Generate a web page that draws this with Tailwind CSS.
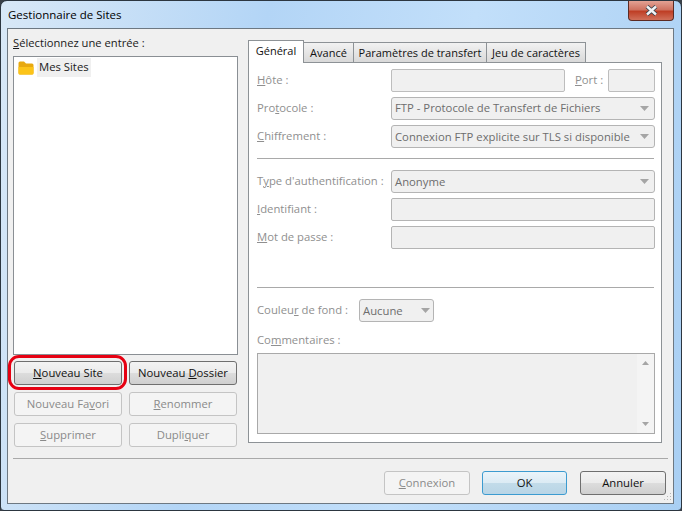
<!DOCTYPE html>
<html lang="fr">
<head>
  <meta charset="UTF-8" />
  <title>Gestionnaire de Sites</title>
  <script src="https://cdn.jsdelivr.net/npm/@tailwindcss/browser@4"></script>
</head>
<body class="bg-[#3a4048] overflow-hidden font-['Open_Sans',sans-serif] text-[11.3px] text-[#1a1a1a]">

<!-- Window frame -->
<div class="relative w-[682px] h-[511px] rounded-t-[7px] rounded-b-[4px] border border-[#2c3640] bg-[linear-gradient(100deg,#d8e8f7_0%,#b3d5f6_35%,#c2dffa_62%,#a9cff3_100%)] overflow-hidden">

  <!-- Title bar -->
  <div class="h-[27px] flex items-start justify-between pl-[7px] pr-[7px]">
    <span class="text-[11.5px] leading-[28px] text-black">Gestionnaire de Sites</span>
    <div class="w-[46px] h-[20px] rounded-b-[4px] border border-t-0 border-[#5c2a22] bg-[linear-gradient(180deg,#e3a294_0%,#cf7361_45%,#bf3f26_55%,#d0705a_100%)] flex items-center justify-center">
      <svg width="13" height="11" viewBox="0 0 13 11">
        <path d="M2 1.5 L11 9.5 M11 1.5 L2 9.5" stroke="#39424c" stroke-width="4.2" />
        <path d="M2 1.5 L11 9.5 M11 1.5 L2 9.5" stroke="#f2f4f6" stroke-width="2.4" />
      </svg>
    </div>
  </div>

  <!-- Client area -->
  <div class="relative mx-[6px] w-[667px] h-[476px] border border-[#6d7882] bg-[#f0f0f0]">
    <div class="flex h-[429px]">

      <!-- Left column -->
      <div class="w-[233px] pl-[5px] shrink-0">
        <div class="h-[27px] leading-[27px] text-[11.2px] text-[#1a1a1a]"><u>S</u>électionnez une entrée :</div>
        <div class="w-[225px] h-[299px] border border-[#8a8f94] bg-white pt-[1px] pl-[4px]">
          <div class="flex items-center h-[19px]">
            <svg width="16" height="14" viewBox="0 0 16 14">
              <path d="M0.5 2 Q0.5 0.5 2 0.5 H6 L8 2.5 H14 Q15.5 2.5 15.5 4 V12 Q15.5 13.5 14 13.5 H2 Q0.5 13.5 0.5 12 Z" fill="#e8a90f" />
              <path d="M0.5 6 H15.5 V12 Q15.5 13.5 14 13.5 H2 Q0.5 13.5 0.5 12 Z" fill="#fcc419" />
            </svg>
            <span class="ml-[3px] px-[2px] h-[19px] bg-[#f0f0f0] leading-[17px] text-[#1a1a1a]">Mes Sites</span>
          </div>
        </div>
        <div class="grid grid-cols-[108px_108px] gap-x-[7px] gap-y-[7px] mt-[6px] ml-[1px]">
          <div class="relative">
            <button class="w-full h-[24px] rounded-[3px] border border-[#6f6f6f] bg-[linear-gradient(180deg,#f3f3f3_0%,#ebebeb_48%,#dcdcdc_52%,#cfcfcf_100%)] text-[#111]"><u>N</u>ouveau Site</button>
            <div class="absolute left-[-6px] top-[-6px] w-[119px] h-[35px] rounded-[11px] border-[3px] border-[#e60012]"></div>
          </div>
          <button class="h-[24px] rounded-[3px] border border-[#6f6f6f] bg-[linear-gradient(180deg,#f3f3f3_0%,#ebebeb_48%,#dcdcdc_52%,#cfcfcf_100%)] text-[#111] whitespace-nowrap">Nouveau <u>D</u>ossier</button>
          <button class="h-[24px] rounded-[3px] border border-[#c4c4c4] bg-[#f4f4f4] text-[#8a8a8a] whitespace-nowrap">Nouveau Fa<u>v</u>ori</button>
          <button class="h-[24px] rounded-[3px] border border-[#c4c4c4] bg-[#f4f4f4] text-[#8a8a8a]"><u>R</u>enommer</button>
          <button class="h-[24px] rounded-[3px] border border-[#c4c4c4] bg-[#f4f4f4] text-[#8a8a8a]"><u>S</u>upprimer</button>
          <button class="h-[24px] rounded-[3px] border border-[#c4c4c4] bg-[#f4f4f4] text-[#8a8a8a]">Dupli<u>q</u>uer</button>
        </div>
      </div>

      <!-- Right column: notebook -->
      <div class="ml-[7px] pt-[11px] w-[414px]">
        <div class="flex items-end h-[23px] relative z-10 text-[11px]">
          <div class="w-[56px] h-[23px] border border-b-0 border-[#8d9296] bg-white text-center leading-[20px] text-[#111]">Général</div>
          <div class="w-[50px] h-[20px] border border-b-0 border-l-0 border-[#8d9296] bg-[linear-gradient(180deg,#f2f2f2,#d9d9d9)] text-center leading-[19px] text-[#111] mb-[1px]">Avancé</div>
          <div class="w-[133px] h-[20px] border border-b-0 border-l-0 border-[#8d9296] bg-[linear-gradient(180deg,#f2f2f2,#d9d9d9)] text-center leading-[19px] text-[#111] mb-[1px] whitespace-nowrap">Paramètres de transfert</div>
          <div class="w-[99px] h-[20px] border border-b-0 border-l-0 border-[#8d9296] bg-[linear-gradient(180deg,#f2f2f2,#d9d9d9)] text-center leading-[19px] text-[#111] mb-[1px] whitespace-nowrap">Jeu de caractères</div>
        </div>
        <div class="-mt-[1px] w-[414px] h-[381px] border border-[#8d9296] bg-white pl-[8px] pr-[6px] pt-[6px] text-[#8f8f8f]">
          <!-- Host -->
          <div class="flex h-[23px] items-center">
            <span class="w-[134px] shrink-0"><u>H</u>ôte :</span>
            <div class="w-[174px] h-[23px] rounded-[2px] border border-[#bdbdbd] bg-[#f0f0f0]"></div>
            <span class="w-[43px] pl-[10px] shrink-0"><u>P</u>ort :</span>
            <div class="w-[47px] h-[23px] rounded-[2px] border border-[#bdbdbd] bg-[#f0f0f0]"></div>
          </div>
          <!-- Protocol -->
          <div class="flex h-[23px] items-center mt-[5px]">
            <span class="w-[134px] shrink-0">Pro<u>t</u>ocole :</span>
            <div class="w-[264px] h-[23px] rounded-[3px] border border-[#b4b4b4] bg-[#f0f0f0] flex items-center justify-between pl-[3px] pr-[5px] text-[#6d6d6d] whitespace-nowrap">
              <span>FTP - Protocole de Transfert de Fichiers</span>
              <svg width="9" height="5" viewBox="0 0 9 5"><path d="M0 0H9L4.5 5Z" fill="#a5a5a5" /></svg>
            </div>
          </div>
          <!-- Encryption -->
          <div class="flex h-[23px] items-center mt-[5px]">
            <span class="w-[134px] shrink-0"><u>C</u>hiffrement :</span>
            <div class="w-[264px] h-[23px] rounded-[3px] border border-[#b4b4b4] bg-[#f0f0f0] flex items-center justify-between pl-[3px] pr-[5px] text-[#6d6d6d] whitespace-nowrap">
              <span class="pt-[2px]">Connexion FTP explicite sur TLS si disponible</span>
              <svg width="9" height="5" viewBox="0 0 9 5"><path d="M0 0H9L4.5 5Z" fill="#a5a5a5" /></svg>
            </div>
          </div>
          <div class="h-px w-[397px] bg-[#a9a9a9] mt-[10px]"></div>
          <!-- Logon type -->
          <div class="flex h-[23px] items-center mt-[11px]">
            <span class="w-[134px] shrink-0 whitespace-nowrap">T<u>y</u>pe d'authentification :</span>
            <div class="w-[264px] h-[23px] rounded-[3px] border border-[#b4b4b4] bg-[#f0f0f0] flex items-center justify-between pl-[3px] pr-[5px] text-[#6d6d6d]">
              <span class="pt-[2px]">Anonyme</span>
              <svg width="9" height="5" viewBox="0 0 9 5"><path d="M0 0H9L4.5 5Z" fill="#a5a5a5" /></svg>
            </div>
          </div>
          <div class="flex h-[23px] items-center mt-[5px]">
            <span class="w-[134px] shrink-0"><u>I</u>dentifiant :</span>
            <div class="w-[264px] h-[23px] rounded-[2px] border border-[#b4b4b4] bg-[#f0f0f0]"></div>
          </div>
          <div class="flex h-[23px] items-center mt-[5px]">
            <span class="w-[134px] shrink-0"><u>M</u>ot de passe :</span>
            <div class="w-[264px] h-[23px] rounded-[2px] border border-[#b4b4b4] bg-[#f0f0f0]"></div>
          </div>
          <div class="h-px w-[397px] bg-[#a9a9a9] mt-[38px]"></div>
          <!-- Background colour -->
          <div class="flex h-[23px] items-center mt-[11px]">
            <span class="w-[102px] shrink-0 whitespace-nowrap">Couleu<u>r</u> de fond :</span>
            <div class="w-[75px] h-[23px] rounded-[3px] border border-[#b4b4b4] bg-[#f0f0f0] flex items-center justify-between pl-[3px] pr-[3px] text-[#6d6d6d]">
              <span class="pt-[2px]">Aucune</span>
              <svg width="9" height="5" viewBox="0 0 9 5"><path d="M0 0H9L4.5 5Z" fill="#a5a5a5" /></svg>
            </div>
          </div>
          <div class="h-[18px] leading-[18px] mt-[9px]">Co<u>m</u>mentaires :</div>
          <!-- Comments -->
          <div class="mt-[4px] w-[398px] h-[81px] border border-[#a9a9a9] bg-[#f0f0f0] flex justify-end">
            <div class="w-[17px] bg-[#f4f4f4] flex flex-col items-center justify-between py-[7px]">
              <svg width="7" height="4" viewBox="0 0 7 4"><path d="M0 4H7L3.5 0Z" fill="#a5a5a5" /></svg>
              <svg width="7" height="4" viewBox="0 0 7 4"><path d="M0 0H7L3.5 4Z" fill="#a5a5a5" /></svg>
            </div>
          </div>
        </div>
      </div>
    </div>

    <!-- Footer -->
    <div class="ml-[5px] mr-[5px] h-px bg-[#a9a9a9]"></div>
    <div class="flex justify-end pt-[12px] pr-[7px]">
      <button class="w-[86px] h-[24px] rounded-[3px] border border-[#c4c4c4] bg-[#f4f4f4] text-[#8a8a8a]"><u>C</u>onnexion</button>
      <button class="ml-[12px] w-[85px] h-[24px] rounded-[3px] border border-[#3c9bd0] bg-[linear-gradient(180deg,#eaf4fa_0%,#dcebf4_48%,#c2dbe9_52%,#b9d5e6_100%)] text-[#111]">OK</button>
      <button class="ml-[13px] w-[86px] h-[24px] rounded-[3px] border border-[#6f6f6f] bg-[linear-gradient(180deg,#f3f3f3_0%,#ebebeb_48%,#dcdcdc_52%,#cfcfcf_100%)] text-[#111]">Annuler</button>
    </div>
    <!-- Resize grip -->
    <svg class="absolute right-[1px] bottom-[1px]" width="10" height="10" viewBox="0 0 10 10">
      <path d="M8 1h1v1H8zM5 4h1v1H5zM8 4h1v1H8zM2 7h1v1H2zM5 7h1v1H5zM8 7h1v1H8z" fill="#b5b5b5" />
    </svg>
  </div>
</div>

</body>
</html>
